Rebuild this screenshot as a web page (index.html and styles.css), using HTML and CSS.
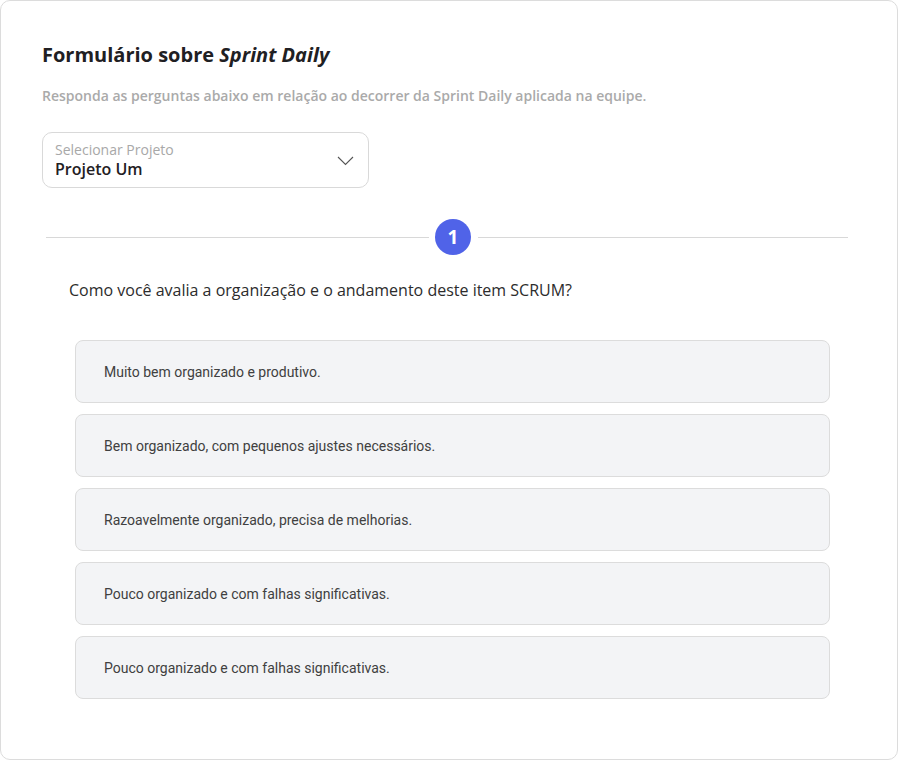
FILE: index.html
```html
<!DOCTYPE html>
<html lang="pt-BR">
<head>
<meta charset="utf-8">
<title>Formulário sobre Sprint Daily</title>
<link rel="stylesheet" href="styles.css">
</head>
<body>
<main class="card">
  <h1 class="title">Formulário sobre <em>Sprint Daily</em></h1>
  <p class="subtitle">Responda as perguntas abaixo em relação ao decorrer da Sprint Daily aplicada na equipe.</p>

  <div class="select">
    <div class="select-text">
      <span class="select-label">Selecionar Projeto</span>
      <span class="select-value">Projeto Um</span>
    </div>
    <svg class="chevron" width="17" height="10" viewBox="0 0 17 10"><path d="M1 1 L8.5 8.5 L16 1" fill="none" stroke="#555" stroke-width="1.1"/></svg>
  </div>

  <div class="step">
    <span class="line line-left"></span>
    <span class="badge">1</span>
    <span class="line line-right"></span>
  </div>

  <p class="question">Como você avalia a organização e o andamento deste item SCRUM?</p>

  <ul class="options">
    <li class="option">Muito bem organizado e produtivo.</li>
    <li class="option">Bem organizado, com pequenos ajustes necessários.</li>
    <li class="option">Razoavelmente organizado, precisa de melhorias.</li>
    <li class="option">Pouco organizado e com falhas significativas.</li>
    <li class="option">Pouco organizado e com falhas significativas.</li>
  </ul>
</main>
</body>
</html>
```
FILE: styles.css
```css
* { box-sizing: border-box; }
html, body { margin: 0; padding: 0; background: #fff; }
body { width: 898px; height: 760px; }

.card {
  width: 898px;
  height: 760px;
  border: 1px solid #dcdcdc;
  border-radius: 10px;
  padding: 41px 49px 0 41px;
  font-family: "Open Sans", sans-serif;
  color: #222;
}

.title {
  margin: 0;
  font-size: 20px;
  line-height: 26px;
  font-weight: 700;
  color: #1f2023;
}
.title em { font-style: italic; }

.subtitle {
  margin: 18px 0 0;
  font-size: 14px;
  line-height: 19px;
  font-weight: 600;
  color: #aaaaaa;
}

.select {
  margin-top: 27px;
  width: 327px;
  height: 56px;
  border: 1px solid #d9d9d9;
  border-radius: 10px;
  display: flex;
  align-items: center;
  justify-content: space-between;
  padding: 0 14px 0 12px;
}
.select-text { display: flex; flex-direction: column; }
.select-label {
  font-size: 14px;
  line-height: 17px;
  color: #a8a8a8;
}
.select-value {
  font-size: 16px;
  line-height: 22px;
  font-weight: 600;
  color: #1f2023;
}
.chevron { margin-top: 2px; }

.step {
  margin: 31px 0 0 4px;
  display: flex;
  align-items: center;
}
.line { height: 1px; background: #d8d8d8; }
.line-left { width: 383px; }
.line-right { flex: 1; }
.badge {
  width: 36px;
  height: 36px;
  margin: 0 7px 0 6px;
  border-radius: 50%;
  background: #5063e8;
  color: #fff;
  font-weight: 700;
  font-size: 19px;
  display: flex;
  align-items: center;
  justify-content: center;
}

.question {
  margin: 24px 0 0 27px;
  font-size: 16px;
  line-height: 22px;
  color: #2c2c2c;
}

.options {
  list-style: none;
  margin: 39px 0 0 33px;
  padding: 0;
  width: 755px;
  display: flex;
  flex-direction: column;
  gap: 11px;
}
.option {
  height: 63px;
  border: 1px solid #dcdcdc;
  border-radius: 8px;
  background: #f3f4f6;
  display: flex;
  align-items: center;
  padding-left: 28px;
  font-family: Roboto, sans-serif;
  font-size: 14px;
  color: #404040;
}
```
